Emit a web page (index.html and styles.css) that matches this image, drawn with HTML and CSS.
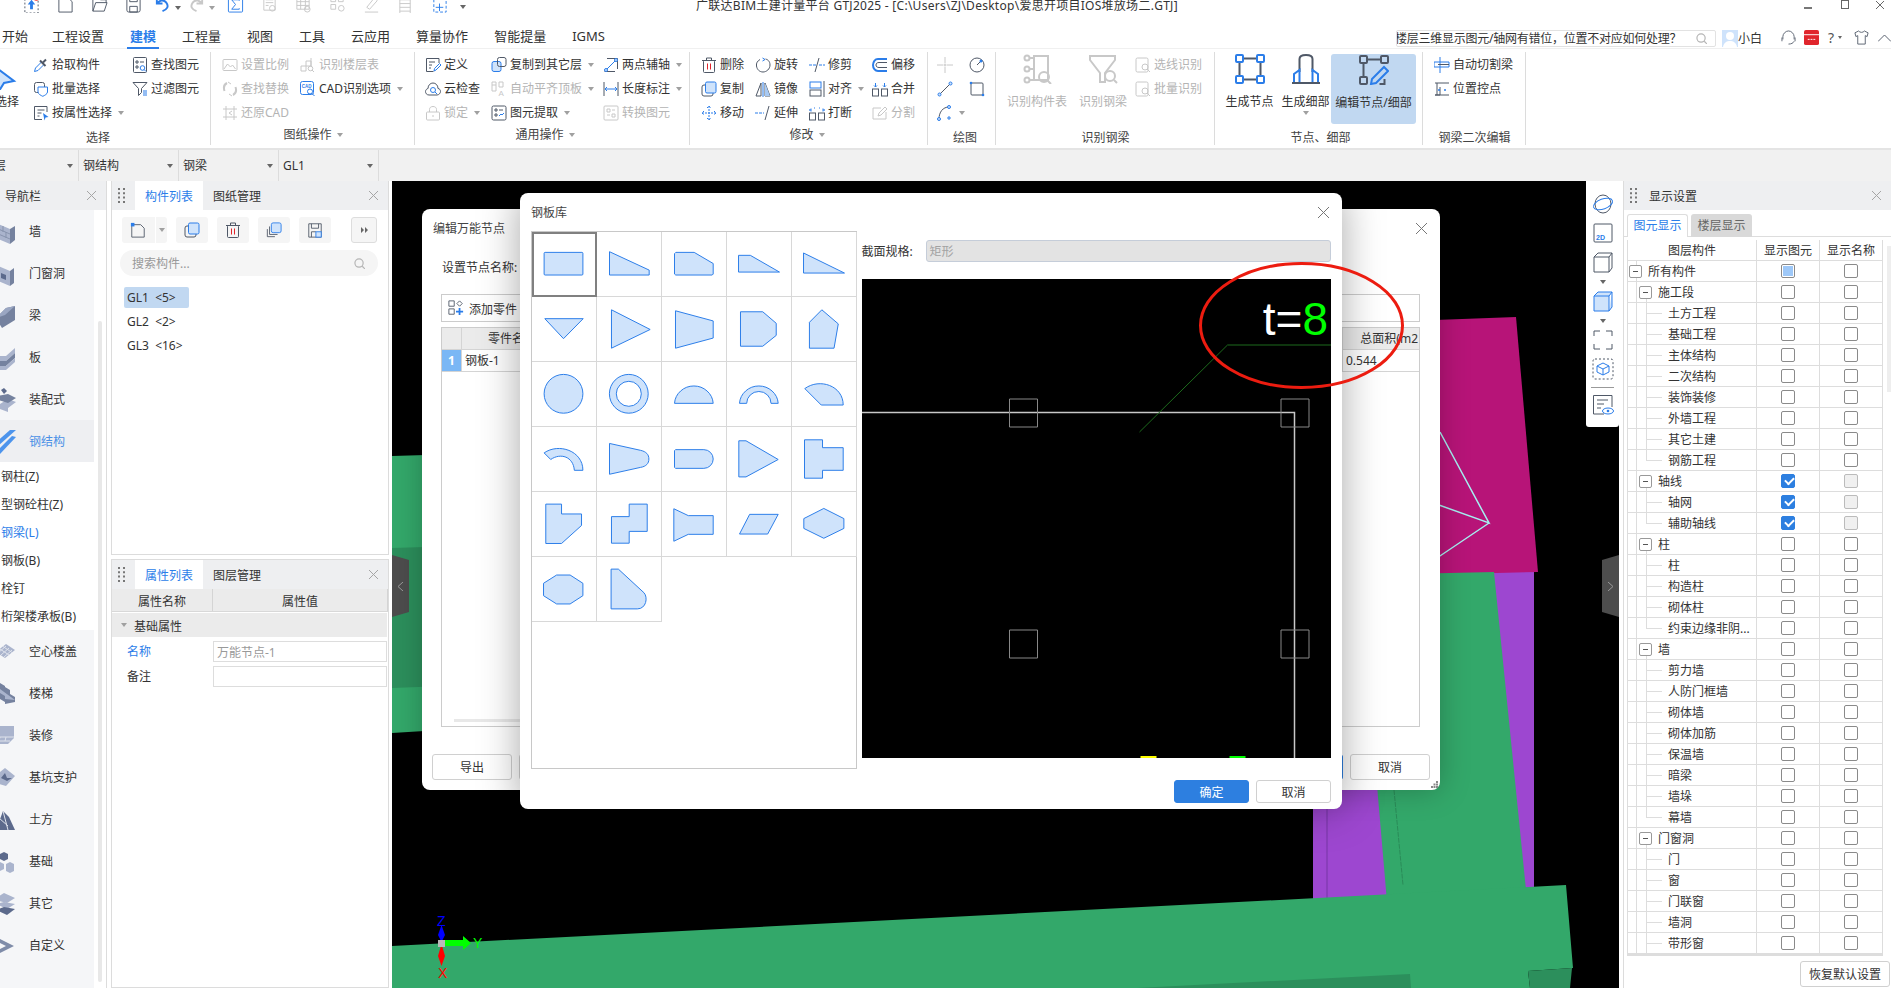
FILE: index.html
```html
<!DOCTYPE html>
<html lang="zh-CN">
<head>
<meta charset="utf-8">
<title>广联达BIM土建计量平台 GTJ2025</title>
<link rel="stylesheet" href="styles.css">
</head>
<body>
<svg class="defs" aria-hidden="true">
<symbol id="i-pick" viewBox="0 0 16 16"><path class="b" d="M1.5 14.5l1-3.5 6-6 2.500 2.500-6 6z"/><path class="d w2" d="M7 3.500l5.500 5.500"/><path class="d w2" d="M10 5.500l3-3"/></symbol>
<symbol id="i-batch" viewBox="0 0 16 16"><rect class="d" x="1.500" y="1.500" width="10" height="10" rx="2"/><path class="wf" d="M5 6h9.500v5c0 2-3 3.500-4.700 4.300C8 14.500 5 13 5 11z"/></symbol>
<symbol id="i-attr" viewBox="0 0 16 16"><path class="d" d="M14 7V1.500H1.500v13H9"/><path class="d" d="M4.500 5h7M4.500 8h4M4.500 11h2"/><path class="sb" d="M10 8l5.500 4-3 .5-1 3z"/></symbol>
<symbol id="i-find" viewBox="0 0 16 16"><rect class="d" x="1.500" y=".5" width="13" height="15" rx="1"/><path class="d" d="M4 4h2v2H4zM8 5h4M4 9h2v2H4z"/><circle class="b" cx="10.500" cy="11" r="2.300"/><path class="b" d="M12 12.500l2 2"/></symbol>
<symbol id="i-filter" viewBox="0 0 16 16"><path class="d" d="M1 1.500h14L9.500 7.500v4l-3 3v-7z"/><path class="b" d="M11 10h4M11 12h4M11 14h4"/></symbol>
<symbol id="i-scale" viewBox="0 0 16 16"><rect class="d" x="1" y="2.500" width="14" height="11" rx="1"/><path class="d" d="M2 12l3.500-5 3 3 2-2 3 4"/></symbol>
<symbol id="i-floor" viewBox="0 0 16 16"><path class="d" d="M1 9h5v5H1zM6 4h5v5H6zM11 1v8"/><circle class="d" cx="10.500" cy="11.500" r="2.300"/><path class="d" d="M12 13l2 2"/></symbol>
<symbol id="i-replace" viewBox="0 0 16 16"><path class="d w2" d="M5 2C2 3.500 1.500 7 2.500 10M11 14c3-1.500 3.500-5 2.500-8"/><path class="d" d="M6 1l3 2M10 15l-3-2"/></symbol>
<symbol id="i-restore" viewBox="0 0 16 16"><path class="d" d="M4 1v14M12 1v14M1 4h14M1 12h14"/><path class="d" d="M10 6L7 8l3 2"/></symbol>
<symbol id="i-cad" viewBox="0 0 16 16"><rect class="b" x=".5" y=".5" width="13" height="13" rx="2"/><text class="cadt" x="1.800" y="6.500">CAD</text><circle class="b" cx="10" cy="10.500" r="2.500"/><path class="b" d="M12 12.500l2.500 2.500"/></symbol>
<symbol id="i-define" viewBox="0 0 16 16"><path class="d" d="M14 6V1.500H1.500v13h7"/><path class="d" d="M4 5h6M4 8h3M4 11h2"/><path class="b" d="M9 14l.5-2.500 5-5 1.500 1.500-5 5z"/></symbol>
<symbol id="i-cloud" viewBox="0 0 16 16"><path class="d" d="M4 14C1.500 14 .5 12 .5 10.500S2 7.500 3 7.500C3 4 5.500 2 8 2s5 2 5 5.500c1.500 0 2.500 1.500 2.500 3S14 14 12 14z"/><circle class="b" cx="8" cy="9" r="2.500"/><path class="b" d="M10 11l2 2"/></symbol>
<symbol id="i-lock" viewBox="0 0 16 16"><rect class="d" x="1.500" y="7" width="13" height="8" rx="1"/><path class="d" d="M4.500 7V4.500C4.500 2.500 6 1.500 8 1.500s3.500 1 3.500 3V7M8 10v2"/></symbol>
<symbol id="i-copyto" viewBox="0 0 16 16"><rect class="f" x="1" y="4.500" width="9" height="10" rx="2"/><rect class="d" x="6.500" y=".5" width="8.500" height="9" rx="2"/></symbol>
<symbol id="i-align" viewBox="0 0 16 16"><path class="d" d="M1 1h4v9H1zM1 4h4"/><path class="d" d="M8 1h4M8 1v5h4V1"/><text class="alignt" x="7.500" y="15">A</text></symbol>
<symbol id="i-extract" viewBox="0 0 16 16"><rect class="d" x="1" y="1" width="14" height="14" rx="1.500"/><path class="d" d="M4 4h2v2H4zM8 5h4M4 9h2v2H4z"/><path class="b" d="M8 11l2-2 1 1 2-2"/></symbol>
<symbol id="i-twopt" viewBox="0 0 16 16"><path class="b" d="M2 14L14 2"/><path class="d" d="M4 1.500h10.500V12M1.500 14.500H12"/><circle class="f" cx="3" cy="13" r="1.500"/><circle class="f" cx="13" cy="3" r="1.500"/></symbol>
<symbol id="i-dim" viewBox="0 0 16 16"><path class="d" d="M1 1v14M15 1v14"/><path class="b" d="M2 8h12M4 6l-2 2 2 2M12 6l2 2-2 2"/></symbol>
<symbol id="i-conv" viewBox="0 0 16 16"><rect class="d" x="1" y="1" width="14" height="14" rx="1"/><path class="d" d="M4 4h3v3H4zM9 9h3v3H9zM9 5h3M4 10h3"/></symbol>
<symbol id="i-del" viewBox="0 0 16 16"><rect class="d" x="2.500" y="3.500" width="11" height="12" rx="1"/><path class="d" d="M1 3.500h14M5.500 3.500V1h5v2.500"/><path class="rd" d="M6.500 6.500v6M9.500 6.500v6"/></symbol>
<symbol id="i-rot" viewBox="0 0 16 16"><path class="d" d="M5 2.500C2.500 4 1 6 1.500 9c.5 3.500 3 6 6.500 6s7-3 7-7-2.500-5.500-4.500-6"/><path class="b" d="M7.500 1l2.500 1.500L7.500 4"/></symbol>
<symbol id="i-trim" viewBox="0 0 16 16"><path class="d" d="M10 1L6 15"/><path class="b" d="M0 8h7.500M10 8h6" stroke-dasharray="3 1"/></symbol>
<symbol id="i-offset" viewBox="0 0 16 16"><path class="b w2" d="M15 2H6C3 2 1 5 1 8s2 6 5 6h9"/><path class="d" d="M15 5.500H7c-2 0-3 1-3 2.500s1 2.500 3 2.500h8"/></symbol>
<symbol id="i-copy" viewBox="0 0 16 16"><rect class="d" x="1" y="4" width="11" height="11" rx="2"/><rect class="f" x="4.500" y="1" width="10.500" height="11" rx="1.500"/></symbol>
<symbol id="i-mirror" viewBox="0 0 16 16"><path class="d" d="M1 15L6 2v13zM15 15L10 2v13z"/><path class="mf" d="M10 2l5 13h-5z"/><path class="b" d="M8 1v15"/></symbol>
<symbol id="i-alignr" viewBox="0 0 16 16"><rect class="b" x="1" y="1" width="11" height="6"/><rect class="d" x="1" y="9" width="11" height="6"/><path class="d" d="M15 0v16"/></symbol>
<symbol id="i-merge" viewBox="0 0 16 16"><rect class="d" x=".5" y="8" width="6" height="7"/><rect class="d" x="9.500" y="8" width="6" height="7"/><path class="b" d="M3.500 2v4M12.500 2v4M2 4.500L3.500 6 5 4.500M11 4.500L12.500 6 14 4.500"/></symbol>
<symbol id="i-move" viewBox="0 0 16 16"><path class="b" d="M8 1v14M1 8h14M6 3l2-2 2 2M6 13l2 2 2-2M3 6L1 8l2 2M13 6l2 2-2 2" stroke-dasharray="2 1"/></symbol>
<symbol id="i-extend" viewBox="0 0 16 16"><path class="b" d="M0 8h9" stroke-dasharray="3 1"/><path class="d" d="M14 1L10 15"/></symbol>
<symbol id="i-break" viewBox="0 0 16 16"><rect class="d" x=".5" y="8" width="6" height="7"/><rect class="d" x="9.500" y="8" width="6" height="7"/><path class="b" d="M3 5h-2.500M2 3.500L.5 5 2 6.500M13 5h2.500M14 3.500L15.500 5 14 6.500M5 3h1M10 3h1"/></symbol>
<symbol id="i-split" viewBox="0 0 16 16"><path class="d" d="M14 7v7H1V3h8"/><path class="d" d="M6 11l1-3 6-6 2 2-6 6z"/></symbol>
<symbol id="i-point" viewBox="0 0 16 16"><path class="d" d="M8 0v6M8 10v6M0 8h6M10 8h6"/><circle class="d" cx="8" cy="8" r="1"/></symbol>
<symbol id="i-circ" viewBox="0 0 16 16"><circle class="d" cx="8" cy="8" r="7"/><path class="d" d="M8 8l4-4"/><circle class="sb" cx="12" cy="4" r="1.500"/></symbol>
<symbol id="i-line" viewBox="0 0 16 16"><path class="d" d="M2 14L14 2"/><circle class="f" cx="2.500" cy="13.500" r="1.500"/><circle class="f" cx="13.500" cy="2.500" r="1.500"/></symbol>
<symbol id="i-rect" viewBox="0 0 16 16"><rect class="d" x="2" y="2" width="12" height="12" rx="1"/><circle class="sb" cx="2" cy="2" r="1.300"/><circle class="sb" cx="14" cy="14" r="1.300"/></symbol>
<symbol id="i-arc" viewBox="0 0 16 16"><path class="d" d="M2 14C2 7 6 2 12 2"/><circle class="f" cx="2" cy="14" r="1.500"/><circle class="f" cx="12" cy="2" r="1.500"/><circle class="f" cx="12" cy="13" r="1.200"/></symbol>
<symbol id="i-sel" viewBox="0 0 16 16"><rect class="d" x="1" y="1" width="12" height="14" rx="1.500"/><circle class="d" cx="10" cy="10" r="3"/><path class="d" d="M12 12l3 3"/></symbol>
<symbol id="i-cut" viewBox="0 0 16 16"><path class="b" d="M0 5h15v5H0zM6 0v16"/><path class="d" d="M4 7.500H15"/></symbol>
<symbol id="i-pos" viewBox="0 0 16 16"><path class="d" d="M1 2h14M1 14h14M3 2v12"/><path class="d" d="M1 14h5V6M15 14"/><circle class="sb" cx="5" cy="9" r="1"/><circle class="sb" cx="11" cy="9" r="1"/></symbol>
<symbol id="b-cursor" viewBox="0 0 30 30"><path class="f b2" d="M-2 3L22 21l-10 2-5 8z"/></symbol>
<symbol id="b-table" viewBox="0 0 30 30"><path class="d w2" d="M12 2h14v24h-14z"/><circle class="d w2" cx="5" cy="4" r="2.500"/><circle class="d w2" cx="5" cy="15" r="2.500"/><circle class="d w2" cx="5" cy="26" r="2.500"/><path class="d w2" d="M8 4h4M8 15h4M8 26h4"/><circle class="d w2" cx="22" cy="23" r="5"/><path class="d w2" d="M25.500 26.500L29 30"/></symbol>
<symbol id="b-funnel" viewBox="0 0 30 30"><path class="d w2" d="M2 2h25v4L17 19v9h-5V19L2 6z"/><circle class="d w2" cx="22" cy="22" r="5"/><path class="d w2" d="M26 26l3 3"/></symbol>
<symbol id="b-node" viewBox="0 0 30 30"><path class="d w2" d="M8 4.500h14M8 25.500h14M4.500 8v14M25.500 8v14"/><rect class="b w2" x="1" y="1" width="7" height="7" rx="1"/><rect class="b w2" x="22" y="1" width="7" height="7" rx="1"/><rect class="b w2" x="1" y="22" width="7" height="7" rx="1"/><rect class="b w2" x="22" y="22" width="7" height="7" rx="1"/></symbol>
<symbol id="b-detail" viewBox="0 0 30 30"><path class="d w2" d="M1 29h28"/><path class="d w2" d="M8.500 18V5c0-2 2-4 6.500-4s6.500 2 6.500 4v13"/><path class="b w2" d="M3 28V20l5.500-4V28M27 28V20l-5.500-4V28"/></symbol>
<symbol id="b-edit" viewBox="0 0 30 30"><rect class="d w2" x="1" y="1" width="7" height="7" rx="1"/><rect class="d w2" x="22" y="1" width="7" height="7" rx="1"/><rect class="d w2" x="1" y="22" width="7" height="7" rx="1"/><path class="d w2" d="M8 4.500h14M4.500 8v14M25.500 24v5h-5"/><path class="b w2" d="M12 29l1-5 12-12 4 4-12 12z"/></symbol>
<symbol id="q-up" viewBox="0 0 18 18"><path class="d" d="M2 3h14v15H2z" stroke-dasharray="2 2"/><path class="sb" d="M9 4l4 5h-2.500v5h-3V9H5z"/><circle class="red" cx="14" cy="2" r="3"/></symbol>
<symbol id="q-new" viewBox="0 0 18 18"><path class="d" d="M2 1h9l5 5v11H2z"/><path class="b" d="M3 0h3v3H3z"/></symbol>
<symbol id="q-open" viewBox="0 0 18 18"><path class="d" d="M2 16V2h6l2 2h6v3M2 16l3-9h12l-3 9z"/></symbol>
<symbol id="q-save" viewBox="0 0 18 18"><rect class="d" x="2" y="1" width="14" height="16" rx="2"/><path class="d" d="M5 1v5h8V1M5 11h8v6H5z"/></symbol>
<symbol id="q-undo" viewBox="0 0 18 18"><path class="b w2" d="M3 2v6h6M3 8c2-3 7-5 10-1s1 7-4 9"/></symbol>
<symbol id="q-redo" viewBox="0 0 18 18"><path class="d w2" d="M15 2v6H9M15 8c-2-3-7-5-10-1s-1 7 4 9"/></symbol>
<symbol id="q-sum" viewBox="0 0 18 18"><rect class="b" x="1.500" y="1" width="15" height="16" rx="1"/><path class="b" d="M13 5V4H5l4 5-4 5h8v-1"/></symbol>
<symbol id="q-a" viewBox="0 0 18 18"><path class="d" d="M3 1h12v14H3z"/><path class="d" d="M5 4h8M5 7h8M5 10h3"/><circle class="d" cx="12" cy="13" r="3"/></symbol>
<symbol id="q-b" viewBox="0 0 18 18"><path class="d" d="M2 2h13v12H2zM2 6h13M2 10h13M6 2v12M11 2v12"/><circle class="d" cx="13" cy="14" r="3"/></symbol>
<symbol id="q-c" viewBox="0 0 18 18"><path class="d" d="M2 1h5v5H2zM10 1h5v5h-5zM2 9h5v5H2z"/><circle class="d" cx="13" cy="13" r="3"/></symbol>
<symbol id="q-d" viewBox="0 0 18 18"><path class="d" d="M4 12L12 2l3 3-8 9zM2 17h14"/></symbol>
<symbol id="q-e" viewBox="0 0 18 18"><path class="d" d="M3 0v18M14 0v18M3 4h11M3 8h11M3 12h11M3 16h11"/></symbol>
<symbol id="q-f" viewBox="0 0 18 18"><path class="b" d="M3 1h9l4 4v12H3z" stroke-dasharray="3 2"/><path class="b" d="M9 8v8M5 12h8"/></symbol>
<symbol id="t-orbit" viewBox="0 0 22 22"><ellipse class="d" cx="11" cy="11" rx="8" ry="9"/><ellipse class="b" cx="11" cy="11" rx="10" ry="5" transform="rotate(-20 11 11)"/></symbol>
<symbol id="t-2d" viewBox="0 0 22 22"><rect class="d" x="2" y="2" width="18" height="18" rx="1"/><text class="t2d" x="4" y="18">2D</text></symbol>
<symbol id="t-cube" viewBox="0 0 22 22"><path class="d" d="M2 6h15v15H2zM2 6l4-4h14l-3 4M17 21l3-4V2"/></symbol>
<symbol id="t-cubeb" viewBox="0 0 22 22"><path class="f" d="M2 6h15v15H2zM2 6l4-4h14l-3 4M17 21l3-4V2"/></symbol>
<symbol id="t-corn" viewBox="0 0 22 22"><path class="d" d="M2 7V2h6M14 2h6v5M20 15v5h-6M8 20H2v-5"/></symbol>
<symbol id="t-dcube" viewBox="0 0 22 22"><rect class="d" x="1" y="1" width="20" height="20" rx="2" stroke-dasharray="2 2"/><path class="b" d="M11 5l6 3v6l-6 3-6-3V8zM5 8l6 3 6-3M11 11v6"/></symbol>
<symbol id="t-eye" viewBox="0 0 22 22"><path class="d" d="M12 20H1.500V1.500h18.500V13"/><path class="d" d="M5 6h11M5 10h7M5 14h4"/><ellipse class="b" cx="16" cy="17" rx="5.500" ry="3"/><circle class="sb" cx="16" cy="17" r="1.300"/></symbol>
<symbol id="p-new" viewBox="0 0 18 18"><path class="d" d="M2 3h10l4 4v10H2z"/><path class="sb" d="M1 1h4v4H1z"/></symbol>
<symbol id="p-save" viewBox="0 0 18 18"><path class="d" d="M2 2h14v15H2zM5 2v5h8V2M5 17v-6h5"/><rect class="f" x="10" y="11" width="6" height="6"/></symbol>
<symbol id="p-dup" viewBox="0 0 18 18"><rect class="f" x="6" y="1" width="11" height="11" rx="2"/><path class="d" d="M4 5v9h9M1.500 8v8.500H10"/></symbol>
<symbol id="p-add" viewBox="0 0 18 18"><path class="d" d="M1 1h6v6H1zM1 10h6v6H1z"/><path class="d" d="M13 1l3 3-3 3-3-3z"/><path class="b w2" d="M13 9v8M9 13h8"/></symbol>
<symbol id="n-wall" viewBox="0 0 16 24"><path class="n1" d="M-4 3l14 6v15L-4 18z"/><path class="n2" d="M10 9l5-3v14l-5 4z"/><path class="n3" d="M-4 8l14 6M-4 13l14 6M3 6v6M6 12v6"/></symbol>
<symbol id="n-door" viewBox="0 0 16 24"><path class="n1" d="M-4 3l14 6v15L-4 18z"/><path class="n2" d="M10 9l4-3v15l-4 3z"/><path class="n4" d="M1 11l5 2v5l-5-2z"/></symbol>
<symbol id="n-beam" viewBox="0 0 16 24"><path class="n2" d="M-4 14L6 4l9-2v14L2 24z"/><path class="n5" d="M-4 14L6 4l9-2-10 9z"/></symbol>
<symbol id="n-slab" viewBox="0 0 16 24"><path class="n1" d="M-4 10h10l9-8v5l-9 8H-4z"/><path class="n2" d="M-4 15h10l9-8v5l-9 8H-4z"/><path class="n1" d="M-4 20h10l9-8v4l-9 8H-4z"/></symbol>
<symbol id="n-prefab" viewBox="0 0 16 24"><path class="n1" d="M0 16l8-5 8 3-8 6v4l-8-3z"/><path class="n2" d="M-2 8l10-2 8 4-8 5L-2 12z"/><path class="n4" d="M1 2l3-2 3 3-3 3z"/></symbol>
<symbol id="n-steel" viewBox="0 0 16 24"><path class="n6" d="M-6 14L10 0l6 0L-2 16z"/><path class="n6" d="M-6 24L12 6l4 1L0 24z"/></symbol>
<symbol id="n-hollow" viewBox="0 0 16 24"><path class="n1" d="M-4 12L6 4l9 6-10 8z"/><path class="n3 lt" d="M0 9l9 6M3 6.500l9 6M-2 13l8-7M1 15l8-7M4 17l8-7"/></symbol>
<symbol id="n-stair" viewBox="0 0 16 24"><path class="n2" d="M-4 4v6l4 3v4l5 3v2l10-2v-5l-5-3v-4l-5-3V4l-5-3z"/><path class="n1" d="M-4 4l4 3v4l5 3v3l10 1"/></symbol>
<symbol id="n-deco" viewBox="0 0 16 24"><path class="n1" d="M-4 2h18v12l-6 6H-4z"/><path class="n3 lt" d="M-4 13h18M-4 17h14M0 13l-1 4M6 13l-1 4"/></symbol>
<symbol id="n-pit" viewBox="0 0 16 24"><path class="n1" d="M-4 9L5 2l10 8-9 10-10-3z"/><path class="n4" d="M1 12l4-5 2 5 5 0-5 3z"/></symbol>
<symbol id="n-earth" viewBox="0 0 16 24"><path class="n4" d="M-4 22L3 3l6 6 6 13z"/><path class="n3 lt" d="M3 3L8 22M-1 10l9 8"/></symbol>
<symbol id="n-fnd" viewBox="0 0 16 24"><path class="n4" d="M0 4l4-2 4 2v5l-4 2-4-2z"/><path class="n1" d="M-4 14l4-2 4 2v5l-4 2-4-2z"/><path class="n1" d="M6 14l4-2 4 2v7l-4 2-4-2z"/></symbol>
<symbol id="n-other" viewBox="0 0 16 24"><path class="n1" d="M-4 6l8-5 11 5-8 5-8-2z"/><path class="n1" d="M-4 12l8-2 11 2-8 5z"/><path class="n4" d="M-4 18l8-3 11 2-8 6z"/></symbol>
<symbol id="n-custom" viewBox="0 0 16 24"><path class="n7" d="M-4 3l18 9-18 9v-4l10-5-10-5z"/></symbol>
</svg>

<header class="titlebar">
  <div class="qa">
    <span class="qa-btn"><svg class="qi"><use href="#q-up"/></svg></span>
    <span class="qa-btn"><svg class="qi"><use href="#q-new"/></svg></span>
    <span class="qa-btn"><svg class="qi"><use href="#q-open"/></svg></span>
    <span class="qa-btn"><svg class="qi"><use href="#q-save"/></svg></span>
    <span class="qa-btn"><svg class="qi"><use href="#q-undo"/></svg><i class="caret dark"></i></span>
    <span class="qa-btn dis"><svg class="qi"><use href="#q-redo"/></svg><i class="caret"></i></span>
    <span class="qa-btn"><svg class="qi"><use href="#q-sum"/></svg></span>
    <span class="qa-btn dis"><svg class="qi"><use href="#q-a"/></svg></span>
    <span class="qa-btn dis"><svg class="qi"><use href="#q-b"/></svg></span>
    <span class="qa-btn dis"><svg class="qi"><use href="#q-c"/></svg></span>
    <span class="qa-btn dis"><svg class="qi"><use href="#q-d"/></svg></span>
    <span class="qa-btn dis"><svg class="qi"><use href="#q-e"/></svg></span>
    <span class="qa-btn"><svg class="qi"><use href="#q-f"/></svg></span>
    <span class="qa-more"><i class="caret dark"></i></span>
  </div>
  <div class="app-title">广联达BIM土建计量平台 GTJ2025 - [C:\Users\ZJ\Desktop\爱思开项目IOS堆放场二.GTJ]</div>
  <div class="winctl">
    <span class="wc-min"></span>
    <span class="wc-max"></span>
    <svg class="wc-x" viewBox="0 0 9 9"><path d="M0 0l9 9M9 0L0 9"/></svg>
  </div>
</header>

<nav class="tabbar">
  <div class="tabs">
    <span class="tab first">开始</span><span class="tab">工程设置</span><span class="tab active">建模</span><span class="tab">工程量</span><span class="tab">视图</span><span class="tab">工具</span><span class="tab">云应用</span><span class="tab">算量协作</span><span class="tab">智能提量</span><span class="tab">IGMS</span>
  </div>
  <div class="tab-right">
    <div class="help-search"><span class="help-text">楼层三维显示图元/轴网有错位，位置不对应如何处理？</span><svg class="mag" viewBox="0 0 12 12"><circle cx="5.500" cy="5.500" r="4.500"/><path d="M9 9l3 3"/></svg></div>
    <svg class="avatar" viewBox="0 0 16 17"><rect width="16" height="17" fill="#cfe3fb"/><circle cx="8" cy="6" r="4" fill="#fff"/><path d="M1 17c1-5 4-6 7-6s6 1 7 6z" fill="#fff"/></svg>
    <span class="user">小白</span>
    <svg class="ri headset" viewBox="0 0 16 16"><path d="M2 10V7c0-3 3-6 6-6s6 3 6 6v3M8 15c3 0 5-1 6-3"/><path d="M1 8v4M15 8v4"/></svg>
    <svg class="ri cal" viewBox="0 0 16 16"><rect width="16" height="16" rx="2" fill="#e0252c"/><path d="M0 5h16" stroke="#fff"/><path d="M4 10h2M7 10h2M10 10h2" stroke="#fff"/></svg>
    <span class="q">?</span><i class="caret dark small"></i>
    <svg class="ri shirt" viewBox="0 0 16 16"><path d="M5 1L1 3l1 4 2-1v9h8V6l2 1 1-4-4-2c-1 2-5 2-6 0z"/></svg>
    <svg class="ri up" viewBox="0 0 13 8"><path d="M0 7.500L6.500 1 13 7.500"/></svg>
  </div>
</nav>

<section class="ribbon">
  <div class="group g1">
    <div class="tools">
      <div class="big bigsel"><svg class="bi"><use href="#b-cursor"/></svg><span>选择</span></div>
      <div class="tgrid c99">
        <div class="tool"><svg class="ti"><use href="#i-pick"/></svg>拾取构件</div>
        <div class="tool"><svg class="ti"><use href="#i-find"/></svg>查找图元</div>
        <div class="tool"><svg class="ti"><use href="#i-batch"/></svg>批量选择</div>
        <div class="tool"><svg class="ti"><use href="#i-filter"/></svg>过滤图元</div>
        <div class="tool"><svg class="ti"><use href="#i-attr"/></svg>按属性选择<i class="caret"></i></div>
      </div>
    </div>
    <div class="label">选择</div>
  </div>
  <div class="group g2">
    <div class="tools">
      <div class="tgrid c78">
        <div class="tool dis"><svg class="ti"><use href="#i-scale"/></svg>设置比例</div>
        <div class="tool dis"><svg class="ti"><use href="#i-floor"/></svg>识别楼层表</div>
        <div class="tool dis"><svg class="ti"><use href="#i-replace"/></svg>查找替换</div>
        <div class="tool"><svg class="ti"><use href="#i-cad"/></svg>CAD识别选项<i class="caret"></i></div>
        <div class="tool dis"><svg class="ti"><use href="#i-restore"/></svg>还原CAD</div>
      </div>
    </div>
    <div class="label drop">图纸操作<i class="caret"></i></div>
  </div>
  <div class="group g3">
    <div class="tools">
      <div class="tgrid c3">
        <div class="tool"><svg class="ti"><use href="#i-define"/></svg>定义</div>
        <div class="tool"><svg class="ti"><use href="#i-copyto"/></svg>复制到其它层<i class="caret"></i></div>
        <div class="tool"><svg class="ti"><use href="#i-twopt"/></svg>两点辅轴<i class="caret"></i></div>
        <div class="tool"><svg class="ti"><use href="#i-cloud"/></svg>云检查</div>
        <div class="tool dis"><svg class="ti"><use href="#i-align"/></svg>自动平齐顶板<i class="caret"></i></div>
        <div class="tool"><svg class="ti"><use href="#i-dim"/></svg>长度标注<i class="caret"></i></div>
        <div class="tool dis"><svg class="ti"><use href="#i-lock"/></svg>锁定<i class="caret"></i></div>
        <div class="tool"><svg class="ti"><use href="#i-extract"/></svg>图元提取<i class="caret"></i></div>
        <div class="tool dis"><svg class="ti"><use href="#i-conv"/></svg>转换图元</div>
      </div>
    </div>
    <div class="label drop">通用操作<i class="caret"></i></div>
  </div>
  <div class="group g4">
    <div class="tools">
      <div class="tgrid c4">
        <div class="tool"><svg class="ti"><use href="#i-del"/></svg>删除</div>
        <div class="tool"><svg class="ti"><use href="#i-rot"/></svg>旋转</div>
        <div class="tool"><svg class="ti"><use href="#i-trim"/></svg>修剪</div>
        <div class="tool"><svg class="ti"><use href="#i-offset"/></svg>偏移</div>
        <div class="tool"><svg class="ti"><use href="#i-copy"/></svg>复制</div>
        <div class="tool"><svg class="ti"><use href="#i-mirror"/></svg>镜像</div>
        <div class="tool"><svg class="ti"><use href="#i-alignr"/></svg>对齐<i class="caret"></i></div>
        <div class="tool"><svg class="ti"><use href="#i-merge"/></svg>合并</div>
        <div class="tool"><svg class="ti"><use href="#i-move"/></svg>移动</div>
        <div class="tool"><svg class="ti"><use href="#i-extend"/></svg>延伸</div>
        <div class="tool"><svg class="ti"><use href="#i-break"/></svg>打断</div>
        <div class="tool dis"><svg class="ti"><use href="#i-split"/></svg>分割</div>
      </div>
    </div>
    <div class="label drop">修改<i class="caret"></i></div>
  </div>
  <div class="group g5">
    <div class="tools">
      <div class="tgrid c5">
        <div class="tool dis"><svg class="ti"><use href="#i-point"/></svg></div>
        <div class="tool"><svg class="ti"><use href="#i-circ"/></svg></div>
        <div class="tool"><svg class="ti"><use href="#i-line"/></svg></div>
        <div class="tool"><svg class="ti"><use href="#i-rect"/></svg></div>
        <div class="tool"><svg class="ti"><use href="#i-arc"/></svg><i class="caret"></i></div>
      </div>
    </div>
    <div class="label">绘图</div>
  </div>
  <div class="group g6">
    <div class="tools">
      <div class="big w60 dis"><svg class="bi"><use href="#b-table"/></svg><span>识别构件表</span></div>
      <div class="big w60 dis"><svg class="bi"><use href="#b-funnel"/></svg><span>识别钢梁</span></div>
      <div class="tgrid c1 dis">
        <div class="tool"><svg class="ti"><use href="#i-sel"/></svg>选线识别</div>
        <div class="tool"><svg class="ti"><use href="#i-sel"/></svg>批量识别</div>
      </div>
    </div>
    <div class="label">识别钢梁</div>
  </div>
  <div class="group g7">
    <div class="tools">
      <div class="big w56"><svg class="bi"><use href="#b-node"/></svg><span>生成节点</span></div>
      <div class="big w56"><svg class="bi"><use href="#b-detail"/></svg><span>生成细部</span><i class="caret"></i></div>
      <div class="big w85 sel"><svg class="bi"><use href="#b-edit"/></svg><span>编辑节点/细部</span></div>
    </div>
    <div class="label">节点、细部</div>
  </div>
  <div class="group g8">
    <div class="tools">
      <div class="tgrid c1">
        <div class="tool"><svg class="ti"><use href="#i-cut"/></svg>自动切割梁</div>
        <div class="tool"><svg class="ti"><use href="#i-pos"/></svg>位置控点</div>
      </div>
    </div>
    <div class="label">钢梁二次编辑</div>
  </div>
</section>

<section class="selbar">
  <div class="sel-item s0"><span class="clip">首层</span><i class="caret dark"></i></div>
  <div class="sel-item"><span>钢结构</span><i class="caret dark"></i></div>
  <div class="sel-item"><span>钢梁</span><i class="caret dark"></i></div>
  <div class="sel-item"><span>GL1</span><i class="caret dark"></i></div>
</section>

<main class="main">
  <aside class="nav">
    <div class="phead"><span class="nav-title">导航栏</span><svg class="px" viewBox="0 0 9 9"><path d="M0 0l9 9M9 0L0 9"/></svg></div>
    <div class="nav-body">
      <div class="nav-list">
        <div class="nav-row"><svg class="ni"><use href="#n-wall"/></svg>墙</div>
        <div class="nav-row"><svg class="ni"><use href="#n-door"/></svg>门窗洞</div>
        <div class="nav-row"><svg class="ni"><use href="#n-beam"/></svg>梁</div>
        <div class="nav-row"><svg class="ni"><use href="#n-slab"/></svg>板</div>
        <div class="nav-row"><svg class="ni"><use href="#n-prefab"/></svg>装配式</div>
        <div class="nav-row active"><svg class="ni"><use href="#n-steel"/></svg>钢结构</div>
        <div class="nav-sub">钢柱(Z)</div>
        <div class="nav-sub">型钢砼柱(Z)</div>
        <div class="nav-sub on">钢梁(L)</div>
        <div class="nav-sub">钢板(B)</div>
        <div class="nav-sub">栓钉</div>
        <div class="nav-sub">桁架楼承板(B)</div>
        <div class="nav-row"><svg class="ni"><use href="#n-hollow"/></svg>空心楼盖</div>
        <div class="nav-row"><svg class="ni"><use href="#n-stair"/></svg>楼梯</div>
        <div class="nav-row"><svg class="ni"><use href="#n-deco"/></svg>装修</div>
        <div class="nav-row"><svg class="ni"><use href="#n-pit"/></svg>基坑支护</div>
        <div class="nav-row"><svg class="ni"><use href="#n-earth"/></svg>土方</div>
        <div class="nav-row"><svg class="ni"><use href="#n-fnd"/></svg>基础</div>
        <div class="nav-row"><svg class="ni"><use href="#n-other"/></svg>其它</div>
        <div class="nav-row"><svg class="ni"><use href="#n-custom"/></svg>自定义</div>
      </div>
      <div class="nav-thumb"></div>
    </div>
  </aside>

  <div class="midcol">
    <section class="panel p-list">
      <div class="phead">
        <svg class="dots" viewBox="0 0 7 15"><path d="M0 0h2v2H0zM5 0h2v2H5zM0 4.300h2v2H0zM5 4.300h2v2H5zM0 8.600h2v2H0zM5 8.600h2v2H5zM0 13h2v2H0zM5 13h2v2H5z"/></svg>
        <span class="ptab on">构件列表</span><span class="ptab">图纸管理</span>
        <svg class="px" viewBox="0 0 9 9"><path d="M0 0l9 9M9 0L0 9"/></svg>
      </div>
      <div class="ptools">
        <div class="pbtn split"><svg class="pi"><use href="#p-new"/></svg><span class="splitc"><i class="caret"></i></span></div>
        <div class="pbtn"><svg class="pi"><use href="#i-copy"/></svg></div>
        <div class="pbtn"><svg class="pi"><use href="#i-del"/></svg></div>
        <div class="pbtn"><svg class="pi"><use href="#p-dup"/></svg></div>
        <div class="pbtn"><svg class="pi"><use href="#p-save"/></svg></div>
        <div class="pbtn more"><svg class="ff" viewBox="0 0 7 6"><path d="M0 0l3 3-3 3zM4 0l3 3-3 3z"/></svg></div>
      </div>
      <div class="psearch"><span>搜索构件...</span><svg class="mag" viewBox="0 0 12 12"><circle cx="5.500" cy="5.500" r="4.500"/><path d="M9 9l3 3"/></svg></div>
      <div class="plist">
        <div class="pitem sel">GL1 &nbsp;&lt;5&gt;</div>
        <div class="pitem">GL2 &nbsp;&lt;2&gt;</div>
        <div class="pitem">GL3 &nbsp;&lt;16&gt;</div>
      </div>
    </section>
    <section class="panel p-prop">
      <div class="phead">
        <svg class="dots" viewBox="0 0 7 15"><path d="M0 0h2v2H0zM5 0h2v2H5zM0 4.300h2v2H0zM5 4.300h2v2H5zM0 8.600h2v2H0zM5 8.600h2v2H5zM0 13h2v2H0zM5 13h2v2H5z"/></svg>
        <span class="ptab on">属性列表</span><span class="ptab">图层管理</span>
        <svg class="px" viewBox="0 0 9 9"><path d="M0 0l9 9M9 0L0 9"/></svg>
      </div>
      <div class="prop-head"><span>属性名称</span><span>属性值</span></div>
      <div class="prop-group"><i class="caret"></i><span>基础属性</span></div>
      <div class="prop-row"><span class="k blue">名称</span><span class="v gray">万能节点-1</span></div>
      <div class="prop-row"><span class="k">备注</span><span class="v"></span></div>
    </section>
  </div>

  <div class="canvas">
    <svg class="scene" viewBox="392 181 1227 807">
      <path fill="#33a86a" d="M392 456L600 450V720L392 733z"/>
      <path fill="#2c8f5c" d="M392 548L600 542V680L392 688z"/>
      <path fill="#9d47d0" d="M1313 572H1534V905H1313z"/>
      <path stroke="#7636a6" d="M1327 780V900"/>
      <path fill="#b71478" d="M1300 325L1516 317 1538 572 1300 578z"/>
      <path fill="none" stroke="#a5f1f1" stroke-width="1.500" d="M1440 432L1489 523 1300 455M1489 523L1300 650"/>
      <path fill="#33a86a" d="M1359 575L1494 572 1526 890 1387 902z"/>
      <path stroke="#2a8b58" stroke-dasharray="5 1" d="M1394 790L1403 885"/>
      <path fill="#33a86a" d="M392 946L1566 885 1573 968 1528 971 1530 988H392z"/>
      <path fill="#2c8f5c" d="M1528 971L1572 968 1570 988H1530zM1137 988L1410 974 1411 988z"/>
      <path fill="#00f" d="M441.500 925l-3.500 10 3.500 7 3.500-7z"/>
      <path fill="#f00" d="M441.500 966l-3.500-10 3.500-12 3.500 12z"/>
      <path fill="#0f0" d="M443 940h20v-4l8 7-8 7v-4h-20z"/>
      <rect x="438" y="940" width="7" height="7" fill="#b9b9b9"/>
      <text class="ax z" x="437" y="926">Z</text>
      <text class="ax y" x="473" y="948">Y</text>
      <text class="ax x" x="438" y="978">X</text>
    </svg>

    <div class="handle left"><svg viewBox="0 0 5 9"><path d="M5 0L0 4.500 5 9"/></svg></div>
    <div class="handle right"><svg viewBox="0 0 5 9"><path d="M0 0l5 4.500L0 9"/></svg></div>

    <div class="viewtools">
      <svg class="vt"><use href="#t-orbit"/></svg>
      <svg class="vt"><use href="#t-2d"/></svg>
      <svg class="vt"><use href="#t-cube"/></svg>
      <i class="caret dark"></i>
      <svg class="vt"><use href="#t-cubeb"/></svg>
      <i class="caret dark"></i>
      <svg class="vt"><use href="#t-corn"/></svg>
      <svg class="vt"><use href="#t-dcube"/></svg>
      <span class="vt-sep"></span>
      <svg class="vt"><use href="#t-eye"/></svg>
    </div>

    <div class="dialog back">
      <div class="dlg-title">编辑万能节点</div>
      <svg class="dlg-x" viewBox="0 0 11 11"><path d="M0 0l11 11M11 0L0 11"/></svg>
      <div class="b-name">设置节点名称:</div>
      <div class="b-add"><svg class="pi"><use href="#p-add"/></svg><span>添加零件</span></div>
      <div class="b-table">
        <div class="b-head"><span class="b-n"></span><span class="b-c">零件名称</span><span class="b-s"></span><span class="b-t">总面积(m2</span></div>
        <div class="b-row"><span class="b-n on">1</span><span class="b-c l">钢板-1</span><span class="b-s"></span><span class="b-t l">0.544</span></div>
        <div class="b-bar"></div>
      </div>
      <div class="b-foot">
        <span class="btn">导出</span><span class="btn">导入</span><span class="spacer"></span><span class="btn primary">确定</span><span class="btn">取消</span>
      </div>
      <svg class="grip" viewBox="0 0 7 7"><path d="M5 0h2v2H5zM2.500 2.500h2v2h-2zM5 2.500h2v2H5zM0 5h2v2H0zM2.500 5h2v2h-2zM5 5h2v2H5z"/></svg>
    </div>

    <div class="dialog front">
      <div class="dlg-title">钢板库</div>
      <svg class="dlg-x" viewBox="0 0 11 11"><path d="M0 0l11 11M11 0L0 11"/></svg>
      <div class="f-body">
        <div class="shapes">
          <div class="cell selected"><svg viewBox="0 0 65 65"><rect x="12.300" y="20.700" width="39.400" height="23" rx="1"/></svg></div>
          <div class="cell"><svg viewBox="0 0 65 65"><path d="M12.700 20L53 38.700V43.700H12.700z"/></svg></div>
          <div class="cell"><svg viewBox="0 0 65 65"><path d="M14 20.700H32.700L52 32V42.700L51 43.700H14L12.700 42.700V22z"/></svg></div>
          <div class="cell"><svg viewBox="0 0 65 65"><path d="M11.700 23.700H23.700L53.300 40.700H11.700z"/></svg></div>
          <div class="cell"><svg viewBox="0 0 65 65"><path d="M11.700 21.300L53.300 41.700H11.700z"/></svg></div>
          <div class="cell"><svg viewBox="0 0 65 65"><path d="M13 22H52L32 42.300z"/></svg></div>
          <div class="cell"><svg viewBox="0 0 65 65"><path d="M14.700 13L54 33 14.700 52z"/></svg></div>
          <div class="cell"><svg viewBox="0 0 65 65"><path d="M13.700 14L52 24.300V41.700L13.700 52z"/></svg></div>
          <div class="cell"><svg viewBox="0 0 65 65"><path d="M13.700 15H36.300L50 26.700V39L36.300 50H13.700z"/></svg></div>
          <div class="cell"><svg viewBox="0 0 65 65"><path d="M30.300 13L47 27.300 42.700 52H17.700V25.700z"/></svg></div>
          <div class="cell"><svg viewBox="0 0 65 65"><circle cx="32" cy="32.300" r="19.700"/></svg></div>
          <div class="cell"><svg viewBox="0 0 65 65"><path fill-rule="evenodd" d="M12.600 32.300a19.700 19.700 0 1 0 39.400 0 19.700 19.700 0 1 0-39.400 0zM19.600 32.300a12.700 12.700 0 1 1 25.400 0 12.700 12.700 0 1 1-25.400 0z"/></svg></div>
          <div class="cell"><svg viewBox="0 0 65 65"><path d="M12.700 42A19.700 19 0 0 1 52 42z"/></svg></div>
          <div class="cell"><svg viewBox="0 0 65 65"><path d="M12.700 42A19.700 19 0 0 1 52 42H44.700A12.300 12 0 0 0 20 42z"/></svg></div>
          <div class="cell"><svg viewBox="0 0 65 65"><path d="M13 27C28 16 52 24 52 43.700H29.700z"/></svg></div>
          <div class="cell"><svg viewBox="0 0 65 65"><path d="M12.300 26.300C27 16 51.700 24 51.700 44H43C42 30 29 26 19 33z"/></svg></div>
          <div class="cell"><svg viewBox="0 0 65 65"><path d="M12.700 16.700L44.300 23.700C50 25 52.700 28 52.700 32.500S50 40 44.300 41L12.700 48z"/></svg></div>
          <div class="cell"><svg viewBox="0 0 65 65"><path d="M13.700 23H42.500A9.500 9.500 0 0 1 42.500 42H13.700L12.700 41V24z"/></svg></div>
          <div class="cell"><svg viewBox="0 0 65 65"><path d="M12 14H19.300L52 33 19.300 50.700H12z"/></svg></div>
          <div class="cell"><svg viewBox="0 0 65 65"><path d="M12.700 13H31V21H52V44H31V52H12.700z"/></svg></div>
          <div class="cell"><svg viewBox="0 0 65 65"><path d="M14 12.300H30V22.300H50.300V34L30 52.300H14z"/></svg></div>
          <div class="cell"><svg viewBox="0 0 65 65"><path d="M32.700 12.300H51V40H32.700V52H14.700V25H32.700z"/></svg></div>
          <div class="cell"><svg viewBox="0 0 65 65"><path d="M12 17L26.700 24H52V43H26.700L12 50z"/></svg></div>
          <div class="cell"><svg viewBox="0 0 65 65"><path d="M23 22.700H52L41.300 42.700H12.700z"/></svg></div>
          <div class="cell"><svg viewBox="0 0 65 65"><path d="M32.300 16.700L52.700 27V37L32.300 47 12 37V27z"/></svg></div>
          <div class="cell"><svg viewBox="0 0 65 65"><path d="M25 18.300H38.700L51.700 26.700V39.300L38.700 47.700H25L11.700 39.300V26.700z"/></svg></div>
          <div class="cell"><svg viewBox="0 0 65 65"><path d="M14.300 12.300H21.700L47.700 36.300C52 41 50 52.700 41 52.700H14.300z"/></svg></div>
        </div>
        <div class="f-right">
          <div class="spec"><label>截面规格:</label><span class="spec-in">矩形</span></div>
          <div class="preview">
            <div class="pv-lab"><span>t=</span><b>8</b></div>
            <svg class="pv" viewBox="0 0 469 479">
              <path class="pv-l" d="M0 133.500H432.500V479"/>
              <path class="pv-s" d="M147.500 120h28v28h-28zM419 120h28v28h-28zM147.500 351h28v28h-28zM419 351h28v28h-28z"/>
              <path class="pv-g" d="M277.500 153L365.500 66H469"/>
              <path stroke="#ff0" stroke-width="2" d="M278.500 478h16"/>
              <path stroke="#0f0" stroke-width="2" d="M367.500 478h16"/>
            </svg>
          </div>
        </div>
      </div>
      <div class="f-foot"><span class="btn primary">确定</span><span class="btn">取消</span></div>
    </div>

    <svg class="ring" viewBox="0 0 207 129"><ellipse cx="103.500" cy="64.500" rx="101" ry="62"/></svg>
  </div>

  <aside class="rpanel">
    <div class="phead">
      <svg class="dots" viewBox="0 0 7 15"><path d="M0 0h2v2H0zM5 0h2v2H5zM0 4.300h2v2H0zM5 4.300h2v2H5zM0 8.600h2v2H0zM5 8.600h2v2H5zM0 13h2v2H0zM5 13h2v2H5z"/></svg>
      <span class="r-title">显示设置</span>
      <svg class="px" viewBox="0 0 9 9"><path d="M0 0l9 9M9 0L0 9"/></svg>
    </div>
    <div class="r-tabs"><span class="r-tab on">图元显示</span><span class="r-tab">楼层显示</span></div>
    <div class="r-wrap">
      <div class="r-table">
        <div class="tr th"><div>图层构件</div><div>显示图元</div><div>显示名称</div></div>
        <div class="tr"><div class="tc t0"><i class="tg"></i>所有构件</div><div class="cc"><i class="ck part"></i></div><div class="cc"><i class="ck"></i></div></div>
        <div class="tr"><div class="tc t1"><i class="tg"></i>施工段</div><div class="cc"><i class="ck"></i></div><div class="cc"><i class="ck"></i></div></div>
        <div class="tr"><div class="tc t2">土方工程</div><div class="cc"><i class="ck"></i></div><div class="cc"><i class="ck"></i></div></div>
        <div class="tr"><div class="tc t2">基础工程</div><div class="cc"><i class="ck"></i></div><div class="cc"><i class="ck"></i></div></div>
        <div class="tr"><div class="tc t2">主体结构</div><div class="cc"><i class="ck"></i></div><div class="cc"><i class="ck"></i></div></div>
        <div class="tr"><div class="tc t2">二次结构</div><div class="cc"><i class="ck"></i></div><div class="cc"><i class="ck"></i></div></div>
        <div class="tr"><div class="tc t2">装饰装修</div><div class="cc"><i class="ck"></i></div><div class="cc"><i class="ck"></i></div></div>
        <div class="tr"><div class="tc t2">外墙工程</div><div class="cc"><i class="ck"></i></div><div class="cc"><i class="ck"></i></div></div>
        <div class="tr"><div class="tc t2">其它土建</div><div class="cc"><i class="ck"></i></div><div class="cc"><i class="ck"></i></div></div>
        <div class="tr"><div class="tc t2 last">钢筋工程</div><div class="cc"><i class="ck"></i></div><div class="cc"><i class="ck"></i></div></div>
        <div class="tr"><div class="tc t1"><i class="tg"></i>轴线</div><div class="cc"><i class="ck on"></i></div><div class="cc"><i class="ck off"></i></div></div>
        <div class="tr"><div class="tc t2">轴网</div><div class="cc"><i class="ck on"></i></div><div class="cc"><i class="ck off"></i></div></div>
        <div class="tr"><div class="tc t2 last">辅助轴线</div><div class="cc"><i class="ck on"></i></div><div class="cc"><i class="ck off"></i></div></div>
        <div class="tr"><div class="tc t1"><i class="tg"></i>柱</div><div class="cc"><i class="ck"></i></div><div class="cc"><i class="ck"></i></div></div>
        <div class="tr"><div class="tc t2">柱</div><div class="cc"><i class="ck"></i></div><div class="cc"><i class="ck"></i></div></div>
        <div class="tr"><div class="tc t2">构造柱</div><div class="cc"><i class="ck"></i></div><div class="cc"><i class="ck"></i></div></div>
        <div class="tr"><div class="tc t2">砌体柱</div><div class="cc"><i class="ck"></i></div><div class="cc"><i class="ck"></i></div></div>
        <div class="tr"><div class="tc t2 last">约束边缘非阴...</div><div class="cc"><i class="ck"></i></div><div class="cc"><i class="ck"></i></div></div>
        <div class="tr"><div class="tc t1"><i class="tg"></i>墙</div><div class="cc"><i class="ck"></i></div><div class="cc"><i class="ck"></i></div></div>
        <div class="tr"><div class="tc t2">剪力墙</div><div class="cc"><i class="ck"></i></div><div class="cc"><i class="ck"></i></div></div>
        <div class="tr"><div class="tc t2">人防门框墙</div><div class="cc"><i class="ck"></i></div><div class="cc"><i class="ck"></i></div></div>
        <div class="tr"><div class="tc t2">砌体墙</div><div class="cc"><i class="ck"></i></div><div class="cc"><i class="ck"></i></div></div>
        <div class="tr"><div class="tc t2">砌体加筋</div><div class="cc"><i class="ck"></i></div><div class="cc"><i class="ck"></i></div></div>
        <div class="tr"><div class="tc t2">保温墙</div><div class="cc"><i class="ck"></i></div><div class="cc"><i class="ck"></i></div></div>
        <div class="tr"><div class="tc t2">暗梁</div><div class="cc"><i class="ck"></i></div><div class="cc"><i class="ck"></i></div></div>
        <div class="tr"><div class="tc t2">墙垛</div><div class="cc"><i class="ck"></i></div><div class="cc"><i class="ck"></i></div></div>
        <div class="tr"><div class="tc t2 last">幕墙</div><div class="cc"><i class="ck"></i></div><div class="cc"><i class="ck"></i></div></div>
        <div class="tr"><div class="tc t1"><i class="tg"></i>门窗洞</div><div class="cc"><i class="ck"></i></div><div class="cc"><i class="ck"></i></div></div>
        <div class="tr"><div class="tc t2">门</div><div class="cc"><i class="ck"></i></div><div class="cc"><i class="ck"></i></div></div>
        <div class="tr"><div class="tc t2">窗</div><div class="cc"><i class="ck"></i></div><div class="cc"><i class="ck"></i></div></div>
        <div class="tr"><div class="tc t2">门联窗</div><div class="cc"><i class="ck"></i></div><div class="cc"><i class="ck"></i></div></div>
        <div class="tr"><div class="tc t2">墙洞</div><div class="cc"><i class="ck"></i></div><div class="cc"><i class="ck"></i></div></div>
        <div class="tr"><div class="tc t2">带形窗</div><div class="cc"><i class="ck"></i></div><div class="cc"><i class="ck"></i></div></div>
      </div>
      <div class="r-thumb"></div>
    </div>
    <div class="r-foot"><span class="btn">恢复默认设置</span></div>
  </aside>
</main>
</body>
</html>
```

FILE: styles.css
```css
* { box-sizing: border-box; }
html, body { margin: 0; padding: 0; }
body {
  width: 1891px; height: 988px; overflow: hidden; background: #fff; color: #333;
  font: 12px/16px "Noto Sans", "Noto Sans CJK SC", sans-serif;
  --d: #4f5867; --b: #2b7de9; --f: #cfe3fb;
}
svg { display: block; flex: none; }
.defs { display: none; }
i { font-style: normal; display: block; }

/* shared svg classes */
.d { fill: none; stroke: var(--d); }
.b { fill: none; stroke: var(--b); }
.f { fill: var(--f); stroke: var(--b); }
.sb { fill: var(--b); stroke: none; }
.wf { fill: #fff; stroke: var(--b); }
.w2 { stroke-width: 2; }
.b2 { stroke-width: 2; }
.rd { fill: none; stroke: #e0252c; }
.red { fill: #f02020; }
.mf { fill: #a7c9f3; stroke: none; }
.cadt { font: bold 4.500px "Liberation Sans", sans-serif; fill: var(--b); }
.alignt { font: 8px "Liberation Sans", sans-serif; fill: var(--d); }
.t2d { font: bold 7px "Liberation Sans", sans-serif; fill: var(--b); }
.dis { --d: #c8c8c8; --b: #c8c8c8; --f: #f0f0f0; color: #b4b4b4; }
.dis .big span, .dis span { color: #b4b4b4; }
.n1 { fill: #aab4cd; } .n2 { fill: #75829f; } .n4 { fill: #5c6a8c; }
.n5 { fill: #9aa6c2; } .n6 { fill: #4d94ec; } .n7 { fill: #7f8ca9; }
.n3 { fill: none; stroke: #8793ad; } .lt { stroke: #dfe3ec; }

.caret { width: 0; height: 0; border-left: 3px solid transparent; border-right: 3px solid transparent; border-top: 4px solid #a0a0a0; flex: none; }
.caret.dark { border-top-color: #666; }
.caret.small { border-left-width: 2px; border-right-width: 2px; border-top-width: 3px; }

/* title bar */
.titlebar { display: flex; height: 25px; overflow: hidden; }
.qa { display: flex; padding-left: 14px; height: 13px; }
.qa-btn { width: 34px; height: 13px; display: flex; justify-content: center; align-items: flex-end; gap: 4px; }
.qa-btn .caret { margin-bottom: 3px; }
.qi { width: 17px; height: 17px; }
.qa-more { width: 14px; display: flex; justify-content: center; align-items: center; }
.app-title { margin-left: 226px; line-height: 12px; white-space: nowrap; color: #333; letter-spacing: .27px; }
.winctl { margin-left: auto; display: flex; align-items: flex-start; padding-right: 7px; }
.wc-min { width: 8px; height: 2px; background: #777; margin: 7px 0 0; }
.wc-max { width: 8px; height: 9px; border: 1px solid #666; margin: 0 0 0 29px; }
.wc-x { width: 8px; height: 8px; margin: 1px 0 0 27px; }
.wc-x path { fill: none; stroke: #555; }

/* tab row */
.tabbar { display: flex; height: 24px; border-bottom: 1px solid #f0f0f0; }
.tabs { display: flex; gap: 20px; margin-left: -1px; font-size: 13px; line-height: 23px; }
.tab { padding: 0 3px; position: relative; white-space: nowrap; color: #333; }
.tab.first { margin-right: -2px; }
.tab.active { color: #2b7de9; font-weight: 700; border-bottom: 2px solid #2b7de9; height: 24px; }
.tab-right { margin-left: auto; display: flex; align-items: flex-start; padding-top: 5px; }
.help-search { width: 320px; height: 17px; border: 1px solid #e2e2e2; border-radius: 2px; display: flex; align-items: center; overflow: hidden; padding-left: 2px; margin-right: 6px; position: relative; }
.help-text { white-space: nowrap; text-indent: -4px; letter-spacing: -.25px; display: block; line-height: 15px; }
.mag { width: 11px; height: 11px; }
.mag circle, .mag path { fill: none; stroke: #b5b5b5; stroke-width: 1.300; }
.help-search .mag { margin-left: auto; margin-right: 8px; }
.avatar { width: 16px; height: 17px; }
.user { width: 43px; line-height: 17px; }
.ri { width: 15px; height: 15px; }
.ri path { fill: none; stroke: #5a6270; }
.cal { margin-left: 8px; }
.cal path { stroke: #fff; }
.q { margin-left: 9px; font-size: 14px; line-height: 16px; color: #555; }
.small { margin: 6px 12px 0 4px; }
.shirt { margin-right: 9px; }
.up { width: 13px; height: 8px; margin-top: 4px; }

/* ribbon */
.ribbon { display: flex; height: 101px; border-bottom: 2px solid #e4e4e4; }
.group { height: 93px; margin-top: 3px; border-right: 1px solid #dcdcdc; display: flex; flex-direction: column; flex: none; }
.g1 { width: 211px; } .g2 { width: 204px; padding-left: 11px; }
.g3 { width: 275px; padding-left: 10px; } .g4 { width: 238px; padding-left: 11px; }
.g5 { width: 68px; padding-left: 9px; } .g6 { width: 219px; padding-left: 11px; }
.g7 { width: 208px; padding-left: 10px; } .g8 { width: 103px; padding-left: 11px; }
.tools { height: 73px; padding-top: 1px; display: flex; }
.tgrid { display: grid; grid-auto-rows: 24px; align-content: start; }
.c99 { grid-template-columns: 99px 79px; }
.c78 { grid-template-columns: 78px 115px; }
.c3 { grid-template-columns: 66px 112px 80px; }
.c4 { grid-template-columns: 54px 54px 63px 56px; }
.c5 { grid-template-columns: 32px 32px; }
.c1 { grid-template-columns: 1fr; }
.tool { display: flex; align-items: center; gap: 3px; white-space: nowrap; }
.tool .caret { margin-left: 3px; }
.ti { width: 16px; height: 16px; }
.big { display: flex; flex-direction: column; align-items: center; flex: none; padding-top: 1px; height: 70px; border-radius: 3px; white-space: nowrap; }
.bi { width: 30px; height: 30px; margin-bottom: 10px; }
.bigsel { width: 38px; margin: 0 7px 0 -12px; padding-top: 7px; }
.bigsel .bi { margin-bottom: 4px; }
.w60 { width: 60px; margin-right: 10px; }
.w60 + .w60 { margin-right: 6px; width: 52px; }
.w56 { width: 49px; margin-right: 7px; }
.big > .caret { margin-top: 1px; }
.w85 { width: 85px; margin-left: -6px; margin-top: 1px; height: 70px; }
.big.sel { background: #c1d8f1; }
.label { text-align: center; line-height: 26px; height: 20px; color: #444; white-space: nowrap; }
.label.drop { line-height: 22px; display: flex; justify-content: center; align-items: center; gap: 5px; }
.g1 .label { transform: translateX(-7px); }
.g2 .label, .g6 .label, .g8 .label { transform: translateX(-5px); }
.g3 .label { transform: translateX(-12px); }
.g4 .label { transform: translateX(-7px); }
.g5 .label { transform: translateX(-1px); }
.g7 .label { transform: translateX(-3px); }

/* selector bar */
.selbar { display: flex; height: 31px; background: #f1f1f1; }
.sel-item { width: 100px; border-right: 1px solid #dcdcdc; display: flex; align-items: center; justify-content: space-between; padding: 0 5px 0 4px; }
.sel-item.s0 { width: 79px; padding-left: 0; overflow: hidden; }
.clip { margin-left: -18px; }

/* main area */
.main { display: flex; height: 807px; }
.nav { width: 107px; border-right: 1px solid #dcdcdc; flex: none; }
.phead { height: 29px; background: #eeeff1; display: flex; align-items: center; position: relative; flex: none; }
.nav-title { margin-left: 5px; padding-top: 2px; }
.px { width: 9px; height: 9px; position: absolute; top: 10px; right: 10px; }
.px path { fill: none; stroke: #a5a5a5; }
.nav-body { display: flex; height: 778px; }
.nav-list { width: 94px; background: #f5f6f8; }
.nav-row { height: 42px; display: flex; align-items: center; gap: 13px; white-space: nowrap; padding-top: 2px; }
.nav-row.active { background: #eeeff2; color: #4a90e6; }
.nav-sub { height: 28px; line-height: 30px; background: #fff; padding-left: 1px; white-space: nowrap; }
.nav-sub.on { color: #2b7de9; }
.ni { width: 16px; height: 24px; }
.nav-thumb { width: 4px; height: 661px; margin: 111px 0 0 4px; background: #e8e8e8; border-radius: 2px; }

.midcol { width: 278px; margin: 0 3px 0 4px; display: flex; flex-direction: column; gap: 4px; flex: none; }
.panel { border: 1px solid #dcdcdc; border-top: 0; }
.p-list { height: 374px; }
.p-prop { flex: 1; }
.p-prop .phead { height: 30px; border-top: 1px solid #dcdcdc; }
.dots { width: 7px; height: 15px; margin-left: 6px; }
.dots path { fill: #777; }
.ptab { height: 100%; width: 68px; display: flex; align-items: center; justify-content: center; padding-top: 2px; }
.ptab.on { background: #fff; color: #2b7de9; margin-left: 10px; }
.ptools { display: flex; gap: 9px; margin-top: 7px; padding-left: 10px; height: 26px; }
.pbtn { width: 32px; height: 26px; background: #f5f5f5; border-radius: 3px; display: flex; align-items: center; justify-content: center; }
.pbtn.split { width: 45px; justify-content: flex-start; padding-left: 8px; }
.splitc { margin-left: auto; width: 12px; height: 26px; border-left: 1px solid #fff; display: flex; align-items: center; justify-content: center; }
.pi { width: 16px; height: 16px; }
.pbtn.more { width: 26px; margin-left: 11px; border: 1px solid #ddd; }
.ff { width: 7px; height: 6px; }
.ff path { fill: #666; }
.psearch { margin: 7px 10px 0 8px; height: 26px; border-radius: 13px; background: #f5f5f5; display: flex; align-items: center; justify-content: space-between; padding: 0 13px 0 12px; color: #999; }
.psearch span { padding-top: 2px; }
.plist { padding: 11px 0 0 12px; }
.pitem { height: 24px; line-height: 21px; padding-left: 3px; width: 65px; }
.pitem.sel { height: 21px; margin-bottom: 3px; background: #c1d8f1; border-radius: 2px; }
.prop-head { display: flex; height: 23px; background: #ebebeb; border-bottom: 1px solid #d8d8d8; line-height: 26px; text-align: center; }
.prop-head span:first-child { width: 101px; border-right: 1px solid #d4d4d4; flex: none; }
.prop-head span:last-child { flex: 1; border-right: 1px solid #d4d4d4; }
.prop-group { height: 24px; background: #ebebeb; margin: 1px 1px 0 0; display: flex; align-items: center; padding-left: 9px; gap: 7px; }
.prop-group span { padding-top: 4px; }
.prop-row { display: flex; height: 25px; align-items: center; padding-top: 3px; }
.k { width: 101px; padding: 2px 0 0 15px; flex: none; }
.k.blue { color: #2b7de9; }
.v { flex: 1; height: 21px; border: 1px solid #ddd; margin-right: 1px; padding-left: 3px; line-height: 21px; }
.v.gray { color: #999; }

/* canvas */
.canvas { width: 1227px; height: 807px; position: relative; background: #000; overflow: hidden; flex: none; }
.scene { position: absolute; left: 0; top: 0; width: 1227px; height: 807px; }
.ax { font: 14px "Liberation Sans", sans-serif; }
.ax.z { fill: #00f; } .ax.y { fill: #0f0; } .ax.x { fill: #f00; }
.handle { position: absolute; top: 374px; height: 62px; width: 17px; background: #4d4d4d; display: flex; align-items: center; justify-content: center; }
.handle svg { width: 5px; height: 9px; }
.handle path { fill: none; stroke: #9a9a9a; }
.handle.left { left: 0; clip-path: polygon(0 0, 100% 8%, 100% 92%, 0 100%); }
.handle.right { right: 0; clip-path: polygon(0 8%, 100% 0, 100% 100%, 0 92%); }
.viewtools { position: absolute; right: 0; top: 0; width: 33px; height: 246px; background: #fff; border-radius: 0 0 3px 3px; display: flex; flex-direction: column; align-items: center; padding-top: 12px; }
.vt { width: 22px; height: 22px; margin-bottom: 7px; }
.viewtools .caret { margin: 0 0 6px; }
.vt-sep { width: 23px; height: 1px; background: #999; margin: 0 0 6px; }

/* dialogs */
.dialog { position: absolute; background: #fff; border-radius: 8px; }
.dlg-title { position: absolute; left: 11px; top: 12px; color: #444; }
.dlg-x { position: absolute; width: 11px; height: 11px; }
.dlg-x path { fill: none; stroke: #777; }
.btn { display: flex; align-items: center; justify-content: center; height: 26px; border: 1px solid #d0d0d0; border-radius: 3px; background: #fff; width: 80px; padding-top: 2px; }
.btn.primary { background: #2d7fe0; border-color: #2d7fe0; color: #fff; }

.back { left: 30px; top: 28px; width: 1018px; height: 581px; box-shadow: 0 0 30px rgba(0,0,0,.25); padding: 49px 20px 0 19px; display: flex; flex-direction: column; }
.back .dlg-x { right: 13px; top: 14px; }
.b-name { height: 22px; line-height: 20px; padding-left: 1px; margin-bottom: 14px; white-space: nowrap; }
.b-add { height: 28px; border: 1px solid #ccc; display: flex; align-items: center; gap: 5px; padding-left: 6px; }
.b-add span { padding-top: 4px; }
.b-table { height: 400px; margin-top: 5px; border: 1px solid #ccc; position: relative; }
.b-head, .b-row { display: flex; height: 22px; line-height: 21px; }
.b-head { background: #ebebeb; border-bottom: 1px solid #d4d4d4; }
.b-row { border-bottom: 1px solid #d4d4d4; }
.b-n { width: 20px; flex: none; border-right: 1px solid #d4d4d4; text-align: center; }
.b-n.on { background: #7ab7f5; color: #fff; font-weight: 700; }
.b-c { width: 100px; text-align: center; }
.b-c.l { text-align: left; padding-left: 3px; }
.b-s { flex: 1; }
.b-t { width: 77px; flex: none; border-left: 1px solid #d4d4d4; text-align: right; white-space: nowrap; overflow: hidden; padding-right: 1px; }
.b-t.l { text-align: left; padding-left: 3px; }
.b-bar { position: absolute; left: 12px; bottom: 4px; width: 300px; height: 3px; background: #e8e8e8; }
.b-foot { display: flex; gap: 7px; margin: 27px -10px 0 -9px; }
.spacer { flex: 1; }
.grip { position: absolute; right: 2px; bottom: 2px; width: 7px; height: 7px; }
.grip path { fill: #888; }

.front { left: 128px; top: 12px; width: 822px; height: 616px; box-shadow: 0 0 40px rgba(0,0,0,.35); padding: 38px 11px 0; }
.front .dlg-x { right: 13px; top: 14px; }
.f-body { display: flex; gap: 4.500px; height: 538px; }
.shapes { width: 326px; height: 538px; border: 1px solid #c8c8c8; display: grid; grid-template-columns: repeat(5, 65px); grid-auto-rows: 65px; align-content: start; }
.cell { border-right: 1px solid #d8d8d8; border-bottom: 1px solid #d8d8d8; }
.cell svg { width: 64px; height: 64px; }
.cell path, .cell rect, .cell circle { fill: #cfe3fb; stroke: #2b7de9; }
.cell.selected { outline: 2px solid #808080; outline-offset: -2px; }
.f-right { width: 469.500px; display: flex; flex-direction: column; padding-top: 9px; }
.spec { display: flex; align-items: center; height: 22px; }
.spec label { width: 64px; flex: none; padding-top: 2px; }
.spec-in { flex: 1; height: 22px; background: #e3e3e3; border: 1px solid #c5cdd9; border-radius: 3px; color: #a2a2a2; padding-left: 3px; line-height: 22px; }
.preview { margin-top: 17px; height: 479px; background: #000; position: relative; overflow: hidden; }
.pv { position: absolute; left: 0; top: 0; width: 469px; height: 479px; }
.pv-l { fill: none; stroke: #c8c8c8; stroke-width: 1.500; }
.pv-s { fill: none; stroke: #888; }
.pv-g { fill: none; stroke: #1c6a1c; }
.pv-lab { position: absolute; right: 3px; top: 16px; font: 46px/48px "Liberation Sans", sans-serif; color: #fff; white-space: nowrap; z-index: 1; }
.pv-lab b { font-weight: 400; color: #0f0; }
.f-foot { display: flex; justify-content: flex-end; gap: 7px; margin-top: 11px; }
.f-foot .btn { width: 75px; height: 23px; }
.ring { position: absolute; left: 806px; top: 80px; width: 207px; height: 129px; }
.ring ellipse { fill: none; stroke: #ec1c10; stroke-width: 3; }

/* right panel */
.rpanel { width: 268px; margin-left: 4px; border-left: 1px solid #dcdcdc; flex: none; }
.r-title { margin-left: 12px; padding-top: 2px; }
.r-tabs { display: flex; gap: 3px; padding: 4px 0 0 3px; height: 27px; border-bottom: 1px solid #ddd; }
.r-tab { width: 61px; height: 23px; display: flex; align-items: center; justify-content: center; background: #d9d9d9; color: #666; border-radius: 3px 3px 0 0; }
.r-tab.on { background: #fff; color: #2b7de9; border: 1px solid #ddd; border-bottom: 0; height: 23px; }
.r-wrap { display: flex; margin-top: 3px; padding-left: 3px; }
.r-table { width: 256px; border: 1px solid #ddd; border-width: 0 0 2px 1px; }
.tr { display: grid; grid-template-columns: 129px 63px 63px; height: 21px; border-bottom: 1px solid #ddd; }
.tr.th { text-align: center; line-height: 22px; }
.tr.th > div, .cc, .tc { border-right: 1px solid #ddd; }
.tc { display: flex; align-items: center; gap: 6px; white-space: nowrap; padding-top: 2px; background: linear-gradient(#ddd, #ddd) 8px 0 / 1px 100% no-repeat; }
.t0 { padding-left: 1px; }
.t1 { padding-left: 11px; background-image: linear-gradient(#ddd, #ddd), linear-gradient(#ddd, #ddd); background-position: 8px 0, 18px 13px; background-size: 1px 100%, 1px 8px; background-repeat: no-repeat; }
.t2 { padding-left: 40px; background-image: linear-gradient(#ddd, #ddd), linear-gradient(#ddd, #ddd), linear-gradient(#ddd, #ddd); background-position: 8px 0, 18px 0, 18px 10px; background-size: 1px 100%, 1px 100%, 16px 1px; background-repeat: no-repeat; }
.t2.last { background-size: 1px 100%, 1px 10px, 16px 1px; }
.tg { width: 13px; height: 13px; border: 1px solid #999; border-radius: 2px; background: #fff; position: relative; flex: none; margin-top: -2px; }
.tg::after { content: ""; position: absolute; left: 3px; top: 5px; width: 5px; height: 1px; background: #555; }
.cc { display: flex; align-items: center; justify-content: center; }
.ck { width: 14px; height: 14px; border: 1px solid #8a8a8a; border-radius: 2px; background: #fff; position: relative; }
.ck.part::after { content: ""; position: absolute; inset: 1px; background: #9ec8f8; }
.ck.on { background: #2d7fe0; border-color: #2d7fe0; }
.ck.on::after { content: ""; position: absolute; left: 2.500px; top: 2px; width: 7px; height: 4px; border: solid #fff; border-width: 0 0 2px 2px; transform: rotate(-45deg); }
.ck.off { background: #f0f0f0; border-color: #bbb; }
.r-thumb { width: 4px; height: 146px; margin: 6px 0 0 4px; background: #eee; }
.r-foot { display: flex; justify-content: flex-end; padding: 5px 1px 0 0; }
.r-foot .btn { width: 90px; height: 26px; }
```
